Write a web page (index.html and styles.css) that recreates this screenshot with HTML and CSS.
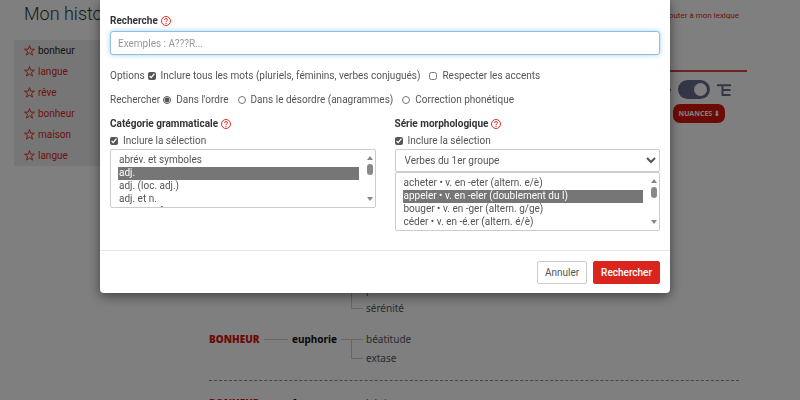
FILE: index.html
```html
<!DOCTYPE html>
<html lang="fr">
<head>
  <meta charset="UTF-8">
  <meta name="viewport" content="width=device-width, initial-scale=1.0">
  <title>Recherche avancée</title>
  <link rel="stylesheet" href="styles.css">
</head>
<body>
  <svg class="sprite" aria-hidden="true">
    <symbol id="star" viewBox="0 0 20 20">
      <path d="M10 1 12.2 7.5 19 7.6 13.6 11.8 15.5 18.4 10 14.5 4.5 18.4 6.4 11.8 1 7.6 7.8 7.5Z" fill="none" stroke="currentColor" stroke-width="1.6"/>
    </symbol>
    <symbol id="help" viewBox="0 0 20 20">
      <circle cx="10" cy="10" r="9" fill="none" stroke="currentColor" stroke-width="1.9"/>
      <path d="M7 7.8C7.1 6 8.3 5.1 10.1 5.1 11.8 5.1 13 6.1 13 7.5 13 9.6 10.2 9.4 10.1 12" fill="none" stroke="currentColor" stroke-width="2"/>
      <circle cx="10.1" cy="14.7" r="1.3" fill="currentColor"/>
    </symbol>
  </svg>

  <div class="page">
    <aside class="history">
      <h2>Mon historique</h2>
      <ul>
        <li><a href="#" class="current"><svg><use href="#star"/></svg>bonheur</a></li>
        <li><a href="#"><svg><use href="#star"/></svg>langue</a></li>
        <li><a href="#"><svg><use href="#star"/></svg>rêve</a></li>
        <li><a href="#"><svg><use href="#star"/></svg>bonheur</a></li>
        <li><a href="#"><svg><use href="#star"/></svg>maison</a></li>
        <li><a href="#"><svg><use href="#star"/></svg>langue</a></li>
      </ul>
    </aside>

    <main class="content">
      <div class="topbar"><a href="#">Ajouter à mon lexique</a></div>
      <div class="tools">
        <svg class="view-icon" viewBox="0 0 14 12"><path d="M0 1.5H10M0 6H14M0 10.5H10" fill="none" stroke="currentColor" stroke-width="2"/></svg>
        <label class="switch"><input type="checkbox" checked aria-label="Vue arborescente"><span></span></label>
        <svg class="view-icon" viewBox="0 0 14 12"><path d="M0 1.2H14M5.5 1V11H13.5M5.5 6.1H13.5" fill="none" stroke="currentColor" stroke-width="2"/></svg>
      </div>
      <div class="nuances"><button type="button">NUANCES ⬇</button></div>

      <section class="tree first">
        <div class="group">
          <ul class="leaves">
            <li>paix</li>
            <li>sérénité</li>
          </ul>
        </div>
        <div class="group">
          <strong class="root">BONHEUR</strong>
          <strong class="branch">euphorie</strong>
          <ul class="leaves">
            <li>béatitude</li>
            <li>extase</li>
          </ul>
        </div>
      </section>
      <section class="tree">
        <div class="group">
          <strong class="root">BONHEUR</strong>
          <strong class="branch">faveur</strong>
          <ul class="leaves">
            <li>béni</li>
          </ul>
        </div>
      </section>
    </main>
  </div>

  <div class="backdrop">
    <form class="modal" role="dialog" aria-label="Recherche avancée">
      <div class="modal-body">
        <div class="title"><label for="word">Recherche</label><svg><use href="#help"/></svg></div>
        <input type="text" id="word" class="word" placeholder="Exemples : A???R..." autofocus>

        <div class="row">
          <span>Options</span>
          <label class="choice"><input type="checkbox" checked>Inclure tous les mots (pluriels, féminins, verbes conjugués)</label>
          <label class="choice"><input type="checkbox">Respecter les accents</label>
        </div>
        <div class="row">
          <span>Rechercher</span>
          <label class="choice"><input type="radio" name="mode" checked>Dans l'ordre</label>
          <label class="choice"><input type="radio" name="mode">Dans le désordre (anagrammes)</label>
          <label class="choice"><input type="radio" name="mode">Correction phonétique</label>
        </div>

        <div class="columns">
          <div>
            <div class="title"><label for="category">Catégorie grammaticale</label><svg><use href="#help"/></svg></div>
            <label class="choice include"><input type="checkbox" checked>Inclure la sélection</label>
            <div class="listbox">
              <select id="category" multiple size="4">
                <option>abrév. et symboles</option>
                <option selected>adj.</option>
                <option>adj. (loc. adj.)</option>
                <option>adj. et n.</option>
                <option>adj. et n. f.</option>
              </select>
              <div class="scroll"><i class="up"></i><i class="thumb"></i><i class="down"></i></div>
            </div>
          </div>
          <div>
            <div class="title"><label for="series">Série morphologique</label><svg><use href="#help"/></svg></div>
            <label class="choice include"><input type="checkbox" checked>Inclure la sélection</label>
            <select id="series" class="series">
              <option>Verbes du 1er groupe</option>
            </select>
            <div class="listbox">
              <select multiple size="4" aria-label="Modèle de conjugaison">
                <option>acheter • v. en -eter (altern. e/è)</option>
                <option selected>appeler • v. en -eler (doublement du l)</option>
                <option>bouger • v. en -ger (altern. g/ge)</option>
                <option>céder • v. en -é.er (altern. é/è)</option>
                <option>chanter • v. régulier</option>
              </select>
              <div class="scroll"><i class="up"></i><i class="thumb"></i><i class="down"></i></div>
            </div>
          </div>
        </div>
      </div>
      <div class="modal-footer">
        <button type="button" class="btn">Annuler</button>
        <button type="submit" class="btn primary">Rechercher</button>
      </div>
    </form>
  </div>
</body>
</html>
```
FILE: styles.css
```css
* {
  box-sizing: border-box;
}
body {
  margin: 0;
  height: 100vh;
  overflow: hidden;
  background: #fff;
  color: #555;
  font-family: Roboto, sans-serif;
  font-size: 10px;
  line-height: 16px;
}
ul {
  list-style: none;
  margin: 0;
  padding: 0;
}
a {
  color: #d9251d;
  text-decoration: none;
}
button, input, select {
  font: inherit;
  color: inherit;
}
.sprite {
  display: none;
}

/* page */
.page {
  display: grid;
  grid-template-columns: 179px 1fr;
  gap: 8px;
  height: 100vh;
  overflow: hidden;
  padding: 0 53px 0 14px;
}
.history h2 {
  margin: 0;
  padding: 2px 10px 14px;
  font-size: 18px;
  font-weight: 300;
  line-height: 24px;
  color: #333;
}
.history ul {
  padding: 0 10px;
  background: #ededed;
}
.history a {
  display: flex;
  align-items: center;
  gap: 3px;
  height: 21px;
}
.history a.current {
  color: #222;
}
.history svg {
  width: 11px;
  height: 11px;
  color: #d9251d;
}
.content {
  font-family: "Noto Sans", sans-serif;
}
.topbar {
  height: 72px;
  padding: 8px 8px 0;
  border-bottom: 2px solid #d9453d;
  text-align: right;
  font-family: Roboto, sans-serif;
  font-size: 8px;
}
.tools {
  display: flex;
  align-items: center;
  justify-content: flex-end;
  gap: 7px;
  padding: 8px 16px 0;
  color: #666c8c;
}
.switch input {
  position: absolute;
  opacity: 0;
}
.switch span {
  display: flex;
  justify-content: flex-end;
  width: 32px;
  height: 19px;
  padding: 3px;
  border-radius: 10px;
  background: #666c8c;
}
.switch span::after {
  content: "";
  width: 13px;
  border-radius: 50%;
  background: #fff;
}
.view-icon {
  width: 14px;
  height: 12px;
}
.nuances {
  display: flex;
  justify-content: flex-end;
  padding: 5px 22px 0;
}
.nuances button {
  height: 19px;
  padding: 0 5px;
  border: 0;
  border-radius: 7px;
  background: #d9150d;
  color: #fff;
  font-size: 7px;
  font-weight: 700;
}
.tree {
  margin: 0 8px;
  padding: 13px 0;
  border-bottom: 1px dashed #b77;
  line-height: 19px;
}
.tree.first {
  padding: 157px 0 12px;
}
.group {
  display: grid;
  grid-template-columns: 83px 59px 1fr;
}
.group + .group {
  margin-top: 12px;
}
.root, .branch {
  display: flex;
  align-items: center;
  gap: 4px;
  height: 19px;
}
.root::after, .branch::after {
  content: "";
  flex: 1;
  height: 1px;
  background: #ccc;
}
.root {
  padding-right: 4px;
  color: #d9150d;
  font-weight: 900;
}
.branch {
  color: #111;
}
.leaves {
  grid-column: 3;
}
.leaves li {
  display: flex;
  align-items: center;
  gap: 3px;
  height: 19px;
  position: relative;
}
.leaves li::before {
  content: "";
  width: 12px;
  height: 1px;
  background: #ccc;
}
.leaves li + li::after {
  content: "";
  position: absolute;
  left: 0;
  bottom: 50%;
  width: 1px;
  height: 100%;
  background: #ccc;
}

/* modal */
.backdrop {
  position: fixed;
  inset: 0;
  padding: 0 130px 0 100px;
  background: rgba(0, 0, 0, 0.5);
}
.modal {
  background: #fff;
  border-radius: 0 0 4px 4px;
  box-shadow: 0 3px 12px rgba(0, 0, 0, 0.5);
}
.modal-body {
  padding: 13px 10px 19px;
}
.title {
  display: flex;
  align-items: center;
  gap: 3px;
  font-weight: 700;
  color: #333;
}
.title svg {
  width: 10px;
  height: 10px;
  color: #d9251d;
}
.word {
  display: block;
  width: 100%;
  height: 24px;
  margin: 2px 0 13px;
  padding: 0 7px;
  border: 1px solid #90c0e0;
  border-radius: 3px;
  outline: none;
  box-shadow: 0 0 5px rgba(102, 175, 233, 0.6);
}
.word::placeholder {
  color: #999;
}
.row {
  display: flex;
  align-items: center;
  margin-bottom: 8px;
  gap: 3px;
}
.choice {
  display: flex;
  align-items: center;
  gap: 5px;
}
.choice input {
  width: 8px;
  height: 8px;
  margin: 0;
  accent-color: #555;
}
.row .choice + .choice {
  margin-left: 6px;
}
.columns {
  display: grid;
  grid-template-columns: 1fr 1fr;
  gap: 19px;
}
.include {
  margin: 1px 0 0;
}
.series {
  display: block;
  width: 100%;
  height: 23px;
  padding-left: 5px;
  border: 1px solid #ccc;
  border-radius: 2px;
  background: #fff;
}
.listbox {
  display: flex;
  height: 59px;
  border: 1px solid #ccc;
  border-radius: 2px;
}
.listbox select {
  flex: 1;
  min-width: 0;
  padding: 4px 6px 0 7px;
  border: 0;
  background: none;
  outline: none;
  overflow: hidden;
}
.listbox option {
  min-height: 0;
  height: 13px;
  padding: 0 1px;
  line-height: 13px;
}
.listbox option:checked {
  background: #767676 linear-gradient(#767676, #767676);
  color: #fff;
}
.scroll {
  display: flex;
  flex-direction: column;
  align-items: center;
  width: 10px;
  padding: 6px 0;
}
.up, .down {
  border: 3px solid transparent;
}
.up {
  border-top: 0;
  border-bottom: 4px solid #888;
}
.down {
  margin-top: auto;
  border-bottom: 0;
  border-top: 4px solid #888;
}
.thumb {
  width: 6px;
  height: 11px;
  margin-top: 4px;
  border-radius: 3px;
  background: #888;
}
.modal-footer {
  display: flex;
  justify-content: flex-end;
  gap: 6px;
  padding: 10px 10px 9px;
  border-top: 1px solid #e5e5e5;
}
.btn {
  height: 23px;
  padding: 0 7px;
  border: 1px solid #ccc;
  border-radius: 2px;
  background: #fff;
}
.primary {
  border-color: #d9251d;
  background: #d9251d;
  color: #fff;
  font-weight: 500;
}
```
